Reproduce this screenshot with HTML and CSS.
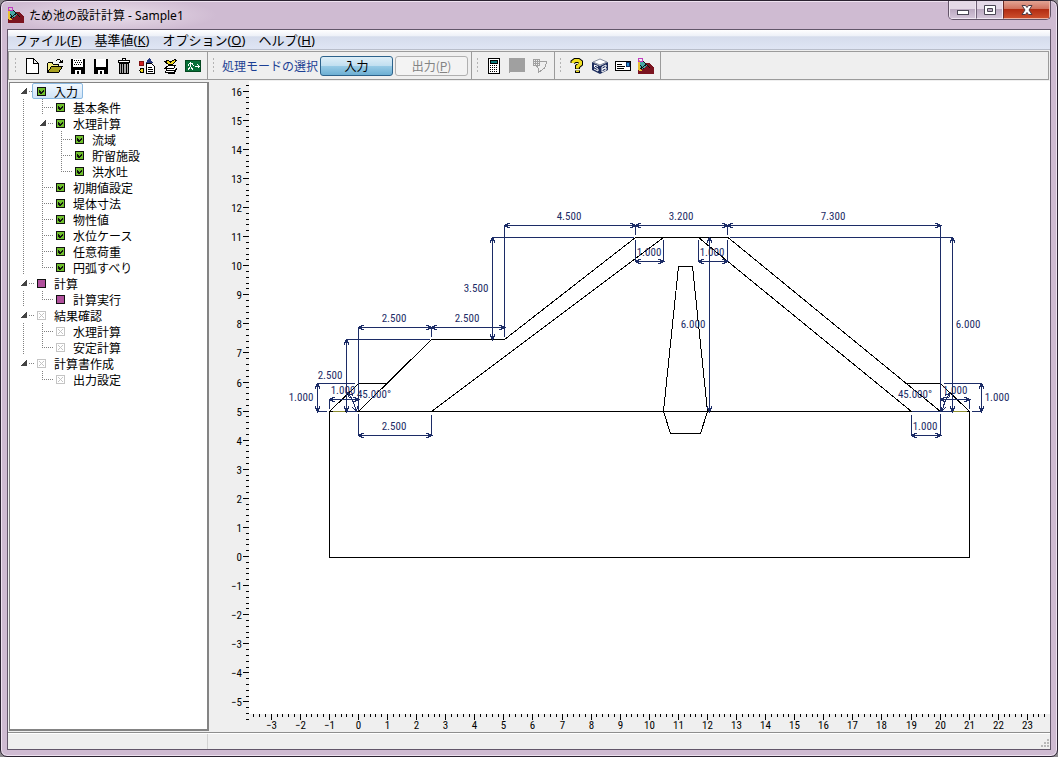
FILE: index.html
```html
<!DOCTYPE html>
<html lang="ja">
  <head>
    <meta charset="UTF-8" />
    <title>ため池の設計計算 - Sample1</title>
    <link rel="stylesheet" href="styles.css">
  </head>
  <body>
    <svg class="defs" aria-hidden="true">
      <symbol id="app" viewBox="0 0 16 16">
        <path fill="#7b1420" d="M0 16V11L4 9L9 5H12L14 8L16 10V16Z" />
        <path fill="#48a8a8" d="M1 4L5 3L9 7L5 11L1 12Z" />
        <path fill="none" stroke="#111" d="M5 3L12 10M1 12L9 6M2 7L6 11" />
        <path fill="#e8c030" d="M0 2H2V11L4 13H1L0 12Z" />
        <path fill="none" stroke="#c03cc0" d="M0.500 4V0.500H4.500V3.500H1" />
      </symbol>
      <symbol id="done" viewBox="0 0 9 9">
        <path fill="#111" d="M0 0H9V9H0Z" />
        <path fill="#6fc02c" d="M1 1H8V8H1Z" />
        <path fill="#111" d="M2 3H3V4H4V5H5V4H6V3H7V5H6V6H5V7H3V6H2Z" />
      </symbol>
      <symbol id="todo" viewBox="0 0 9 9">
        <path fill="#111" d="M0 0H9V9H0Z" />
        <path fill="#b0509c" d="M1 1H8V8H1Z" />
      </symbol>
      <symbol id="off" viewBox="0 0 9 9">
        <path fill="none" stroke="#c4c4c4" d="M0.500 0.500H8.500V8.500H0.500ZM2 2L7 7M7 2L2 7" />
      </symbol>
    </svg>

    <div class="window">
      <header class="titlebar">
        <svg class="icon"><use href="#app" /></svg>
        <h1>ため池の設計計算 - Sample1</h1>
        <div class="caption">
          <button type="button" class="min" aria-label="最小化">
            <svg width="14" height="12"><rect x="1.500" y="6.500" width="11" height="4" fill="#fff" stroke="#4a4654" /></svg>
          </button>
          <button type="button" class="max" aria-label="最大化">
            <svg width="14" height="12"><path fill="#fff" stroke="#4a4654" fill-rule="evenodd" d="M1.500 1.500H12.500V10.500H1.500ZM4.500 4.500V7.500H9.500V4.500Z" /></svg>
          </button>
          <button type="button" class="close" aria-label="閉じる">
            <svg width="14" height="12"><path fill="#fff" stroke="#4a3a44" d="M2 1.500H5.500L7 3.500L8.500 1.500H12L9 6L12 10.500H8.500L7 8.500L5.500 10.500H2L5 6Z" /></svg>
          </button>
        </div>
      </header>

      <div class="client">
        <nav class="menubar">
          <a href="#">ファイル(<u>F</u>)</a>
          <a href="#">基準値(<u>K</u>)</a>
          <a href="#">オプション(<u>O</u>)</a>
          <a href="#">ヘルプ(<u>H</u>)</a>
        </nav>

        <div class="toolbar">
          <div class="group">
            <button type="button" class="tool" aria-label="新規">
              <svg class="icon"><path fill="#fff" stroke="#000" d="M2.500 0.500H9.500L14.500 5.500V15.500H2.500ZM9.500 0.500V5.500H14.500" /></svg>
            </button>
            <button type="button" class="tool" aria-label="開く">
              <svg class="icon"><path fill="#f4ec80" stroke="#000" d="M0.500 14.500V5.500L2 4.500H5L6.500 6.500H11.500V8.500" /><path fill="#a8a020" stroke="#000" d="M0.500 14.500L4.500 8.500H15.500L11.500 14.500Z" /><path fill="none" stroke="#000" d="M8.500 3.500L10.500 1.500H12.500L14.500 4M12 4.500H15V1.500" /></svg>
            </button>
            <button type="button" class="tool" aria-label="保存">
              <svg class="icon"><path d="M1 1H15V16H1Z" /><path fill="#fff" d="M3 1H13V9H3ZM5 12H11V16H9V13H7V16H5Z" /><path stroke="#000" stroke-dasharray="1 1" d="M4 2.500H12M5 4.500H12M4 6.500H12" /></svg>
            </button>
            <button type="button" class="tool" aria-label="上書き保存">
              <svg class="icon"><path d="M1 1H15V16H1Z" /><path fill="#fff" d="M3 1H13V9H3ZM5 12H11V16H9V13H7V16H5Z" /></svg>
            </button>
            <button type="button" class="tool" aria-label="削除">
              <svg class="icon"><path d="M2 2H6V0H10V2H14V5H2Z" /><path fill="#aaa" stroke="#000" d="M3.500 5.500H12.500V15.500H3.500Z" /><path stroke="#000" d="M5.500 5V15M7.500 5V15M10.500 5V15" /><path fill="#fff" d="M7 1H9V2H7ZM3 3H13V4H3Z" /></svg>
            </button>
            <button type="button" class="tool" aria-label="レポート">
              <svg class="icon"><path fill="#d02020" stroke="#801010" d="M0.500 3.500H4.500V7.500H0.500Z" /><path fill="#24357c" d="M7 5L10 0H11L14 5Z" /><circle cx="3" cy="12.500" r="2" fill="#f0d820" stroke="#000" /><path fill="#fff" stroke="#000" d="M7.500 5.500H12.500L15.500 8.500V15.500H7.500ZM9 9.500H13M9 11.500H14M9 13.500H14" /></svg>
            </button>
            <button type="button" class="tool" aria-label="登録">
              <svg class="icon"><path fill="#f0d820" stroke="#000" d="M2.500 3.500L6.500 2.500L8.500 4L12.500 1.500L14.500 2.500L10.500 6.500H6.500Z" /><path fill="#fff" stroke="#000" d="M2.500 10.500L6.500 7.500H13.500L11.500 10.500ZM4.500 11.500L3.500 14.500H12.500L14.500 10.500" /><path stroke="#000" stroke-width="2" d="M6 15H13" /><path stroke="#000" d="M4 12.500H13" /></svg>
            </button>
            <button type="button" class="tool" aria-label="終了">
              <svg class="icon"><path fill="#087038" stroke="#044820" d="M0.500 2.500H15.500V13.500H0.500Z" /><path fill="none" stroke="#fff" d="M5.500 4V9M3 7.500L4.500 5.500H7.500L8.500 8M5 9L3 12M6 9L8 12M10 8.500H14M12.500 6.500L14.500 8.500L12.500 10.500" /></svg>
            </button>
          </div>
          <div class="group">
            <span class="mode">処理モードの選択</span>
            <button type="button" class="switch on">入力</button>
            <button type="button" class="switch" disabled>出力(<u>P</u>)</button>
          </div>
          <div class="group">
            <button type="button" class="tool" aria-label="計算">
              <svg class="icon"><path fill="#fff" stroke="#000" d="M2.500 0.500H13.500V15.500H2.500Z" /><path fill="#087878" stroke="#000" d="M4.500 2.500H11.500V5.500H4.500Z" /><path stroke="#000" stroke-dasharray="1 1" d="M4 7.500H12M4 9.500H12M4 11.500H12M4 13.500H12" /></svg>
            </button>
            <button type="button" class="tool" aria-label="一覧" disabled>
              <svg class="icon"><path fill="#a0a0a0" d="M0 0H16V14H1V15H0Z" /></svg>
            </button>
            <button type="button" class="tool" aria-label="図" disabled>
              <svg class="icon"><path fill="none" stroke="#a0a0a0" d="M1.500 1.500H7.500V7.500H1.500ZM3.500 1V8M5.500 1V8M1 3.500H8M1 5.500H8M7.500 3.500H14.500V5L12.500 10L6.500 14.500V10.500L4.500 8" /></svg>
            </button>
          </div>
          <div class="group">
            <button type="button" class="tool" aria-label="ヘルプ">
              <svg class="icon smooth"><path fill="none" stroke="#000" stroke-width="5" d="M4 5V4L6 2.500H9.500L11.500 4V6L8.500 8.500V11M8.500 12.500V15" /><path fill="none" stroke="#f0e020" stroke-width="3" d="M4 5V4L6 2.500H9.500L11.500 4V6L8.500 8.500V10.500M8.500 12.500V14" /></svg>
            </button>
            <button type="button" class="tool" aria-label="ホームページ">
              <svg class="icon smooth"><path fill="#fff" stroke="#8890a0" d="M1 4L8 1L15 4L8 7Z" /><path fill="#1c2c5c" d="M0 4L8 8V16L0 12ZM8 8L16 4V12L8 16Z" /><path fill="none" stroke="#fff" d="M6 8.500L2.500 7V9L6 11V13L2 11M10 14V9L14 7V9L10 11.500L14 10V12L10 14" /></svg>
            </button>
            <button type="button" class="tool" aria-label="メール">
              <svg class="icon"><path fill="#fff" stroke="#000" d="M0.500 3.500H15.500V12.500H0.500ZM2 6.500H7M2 8.500H10M2 10.500H9" /><path fill="#2890d0" stroke="#102860" d="M11.500 4.500H14.500V8.500H11.500Z" /></svg>
            </button>
            <button type="button" class="tool" aria-label="バージョン情報">
              <svg class="icon"><use href="#app" /></svg>
            </button>
          </div>
        </div>

        <main>
          <aside>
            <ul class="tree">
              <li>
                <div class="row"><i class="open"></i><a class="selected" href="#"><svg><use href="#done" /></svg>入力</a></div>
                <ul>
                  <li><div class="row"><i></i><a href="#"><svg><use href="#done" /></svg>基本条件</a></div></li>
                  <li>
                    <div class="row"><i class="open"></i><a href="#"><svg><use href="#done" /></svg>水理計算</a></div>
                    <ul>
                      <li><div class="row"><i></i><a href="#"><svg><use href="#done" /></svg>流域</a></div></li>
                      <li><div class="row"><i></i><a href="#"><svg><use href="#done" /></svg>貯留施設</a></div></li>
                      <li><div class="row"><i></i><a href="#"><svg><use href="#done" /></svg>洪水吐</a></div></li>
                    </ul>
                  </li>
                  <li><div class="row"><i></i><a href="#"><svg><use href="#done" /></svg>初期値設定</a></div></li>
                  <li><div class="row"><i></i><a href="#"><svg><use href="#done" /></svg>堤体寸法</a></div></li>
                  <li><div class="row"><i></i><a href="#"><svg><use href="#done" /></svg>物性値</a></div></li>
                  <li><div class="row"><i></i><a href="#"><svg><use href="#done" /></svg>水位ケース</a></div></li>
                  <li><div class="row"><i></i><a href="#"><svg><use href="#done" /></svg>任意荷重</a></div></li>
                  <li><div class="row"><i></i><a href="#"><svg><use href="#done" /></svg>円弧すべり</a></div></li>
                </ul>
              </li>
              <li>
                <div class="row"><i class="open"></i><a href="#"><svg><use href="#todo" /></svg>計算</a></div>
                <ul>
                  <li><div class="row"><i></i><a href="#"><svg><use href="#todo" /></svg>計算実行</a></div></li>
                </ul>
              </li>
              <li>
                <div class="row"><i class="open"></i><a href="#"><svg><use href="#off" /></svg>結果確認</a></div>
                <ul>
                  <li><div class="row"><i></i><a href="#"><svg><use href="#off" /></svg>水理計算</a></div></li>
                  <li><div class="row"><i></i><a href="#"><svg><use href="#off" /></svg>安定計算</a></div></li>
                </ul>
              </li>
              <li>
                <div class="row"><i class="open"></i><a href="#"><svg><use href="#off" /></svg>計算書作成</a></div>
                <ul>
                  <li><div class="row"><i></i><a href="#"><svg><use href="#off" /></svg>出力設定</a></div></li>
                </ul>
              </li>
            </ul>
          </aside>

          <svg class="plot" viewBox="209 80 841 652" role="img" aria-label="堤体断面図">
            <defs>
              <marker id="arrow" viewBox="0 0 7 7" refX="6" refY="3.500" markerWidth="7" markerHeight="7" orient="auto-start-reverse">
                <path fill="none" stroke="#1c2c66" d="M1 1L6 3.500L1 6" />
              </marker>
            </defs>
            <rect class="paper" x="249" y="81" width="801" height="633" />
            <g id="ruler"></g>

            <g class="section">
              <path d="M329.500 411.500H969.500V557.500H329.500Z" />
              <path d="M329.500 411.500L358.500 383.500H387" />
              <path d="M358.500 411.500L431.500 339.500H504.500L635.500 237.500H728L940.500 411.500" />
              <path d="M431.500 411.500L663.500 237.500M698.500 237.500L911.500 411.500" />
              <path d="M905 383.500H940.500L969.500 411.500" />
              <path d="M678.500 266.500H692.500L707.500 411.500L700.500 433.500H670.500L663.500 411.500Z" />
              <path class="water" d="M333 411.500H345M953 411.500H967" />
            </g>

            <g class="extension">
              <path d="M504.500 225V337M635.500 225V235M727.500 225V235M940.500 225V411" />
              <path d="M492 237.500H634M730 237.500H953M635.500 240V262M663.500 240V262M698.500 240V262M727.500 240V262" />
              <path d="M358.500 327V411M431.500 327V337M346 339.500H430" />
              <path d="M317 383.500H355M317 411.500H327M347 411.500H357M329.500 399V409" />
              <path d="M358.500 414V436M431.500 415V436" />
              <path d="M911.500 415V436M940.500 414V436M912 411.500H952" />
              <path d="M944 383.500H981M972 411.500H981M969.500 399V409" />
            </g>

            <g class="dimension">
              <path d="M504.500 225.500H635.500" />
              <path d="M635.500 225.500H727.500" />
              <path d="M727.500 225.500H940.500" />
              <path d="M635.500 261.500H663.500" />
              <path d="M698.500 261.500H727.500" />
              <path d="M492.500 237.500V339.500" />
              <path d="M709.500 237.500V411.500" />
              <path d="M952.500 237.500V411.500" />
              <path d="M358.500 327.500H431.500" />
              <path d="M431.500 327.500H504.500" />
              <path d="M346.500 339.500V411.500" />
              <path d="M317.500 383.500V411.500" />
              <path d="M329.500 399.500H358.500" />
              <path d="M348 393Q353 399 356.500 411.500" />
              <path d="M358.500 435.500H431.500" />
              <path d="M911.500 435.500H940.500" />
              <path d="M950 393Q945 399 942 411.500" />
              <path d="M940.500 399.500H969.500" />
              <path d="M981.500 383.500V411.500" />
            </g>

            <g class="value">
              <text x="569" y="220">4.500</text>
              <text x="681" y="220">3.200</text>
              <text x="833" y="220">7.300</text>
              <text x="649" y="256">1.000</text>
              <text x="712" y="256">1.000</text>
              <text x="476" y="292">3.500</text>
              <text x="693" y="328">6.000</text>
              <text x="968" y="328">6.000</text>
              <text x="394" y="322">2.500</text>
              <text x="467" y="322">2.500</text>
              <text x="330" y="379">2.500</text>
              <text x="301" y="401">1.000</text>
              <text x="343" y="394">1.000</text>
              <text x="374" y="398">45.000°</text>
              <text x="394" y="430">2.500</text>
              <text x="925" y="430">1.000</text>
              <text x="915" y="398">45.000°</text>
              <text x="955" y="394">1.000</text>
              <text x="997" y="401">1.000</text>
            </g>
          </svg>
        </main>

        <footer>
          <span></span>
          <svg width="10" height="10"><path fill="#b8b8b8" d="M7 0h2v2h-2zM4 3h2v2h-2zM7 3h2v2h-2zM1 6h2v2h-2zM4 6h2v2h-2zM7 6h2v2h-2z" /></svg>
        </footer>
      </div>
    </div>
    <script src="ruler.js"></script>
  </body>
</html>
```

FILE: styles.css
```css
* {
  box-sizing: border-box;
}
body {
  margin: 0;
  background: #8d8a8e;
  color: #000;
  font-family: "Noto Sans CJK JP", sans-serif;
  font-size: 12px;
}
h1,
ul {
  margin: 0;
  padding: 0;
}
a {
  color: inherit;
  text-decoration: none;
}
button {
  padding: 0;
  font: inherit;
}
.defs {
  display: none;
}
.icon {
  width: 16px;
  height: 16px;
  shape-rendering: crispEdges;
}
.smooth {
  shape-rendering: auto;
}
.window {
  display: flex;
  flex-direction: column;
  height: 100vh;
  padding: 0 6px 6px;
  border: 1px solid #2a2230;
  border-radius: 7px;
  background: #cfbbd2;
  box-shadow: inset 0 0 0 1px #eee2f0;
}
.titlebar {
  display: flex;
  align-items: center;
  gap: 5px;
  height: 28px;
  background: radial-gradient(ellipse 110px 18px at 100px 14px, #eadfeb, transparent);
}
.titlebar .icon {
  margin-left: 1px;
}
h1 {
  flex: 1;
  font-family: "Noto Sans", "Noto Sans CJK JP", sans-serif;
  font-size: 12px;
  font-weight: normal;
}
.caption {
  display: flex;
  align-self: flex-start;
  overflow: hidden;
  height: 19px;
  border: 1px solid #625468;
  border-top: 0;
  border-radius: 0 0 5px 5px;
}
.caption button {
  display: flex;
  align-items: center;
  justify-content: center;
  width: 27px;
  border: 1px solid #efe6f1;
  border-top: 0;
  background: linear-gradient(#e4d8e7 48%, #bba9c1 50%, #d3c4d8);
}
.caption .max {
  border-left: 1px solid #6f6077;
}
.caption .close {
  width: 47px;
  border-color: #eeb4a4;
  border-left: 1px solid #6b2a26;
  background: linear-gradient(#e3a494, #d0705c 48%, #b22c12 50%, #cc4e2c);
}
.client {
  display: flex;
  flex: 1;
  flex-direction: column;
  min-height: 0;
  border: 1px solid #62566a;
  background: #efefef;
}
.menubar {
  display: flex;
  align-items: center;
  gap: 13px;
  height: 20px;
  padding: 0 7px;
  border-bottom: 1px solid #b8bdca;
  background: linear-gradient(#fff, #eef1f8 30%, #d5dcec 36%, #dfe5f4);
  font-family: "Noto Sans", "Noto Sans CJK JP", sans-serif;
  font-size: 13px;
  line-height: 18px;
}
.toolbar {
  display: flex;
  height: 29px;
  margin: 1px 1px 0 0;
  padding-left: 1px;
  border: 1px solid #9b9b9b;
}
.group {
  display: flex;
  align-items: center;
  padding: 0 3px 0 10px;
  border-right: 1px solid #9b9b9b;
  background: radial-gradient(circle, #b4b4b4 1px, transparent 1px) 4px 5px / 3px 4px no-repeat, radial-gradient(circle, #b4b4b4 1px, transparent 1px) 4px 9px / 3px 4px no-repeat, radial-gradient(circle, #b4b4b4 1px, transparent 1px) 4px 13px / 3px 4px no-repeat, radial-gradient(circle, #b4b4b4 1px, transparent 1px) 4px 17px / 3px 4px no-repeat;
}
.tool {
  display: flex;
  justify-content: center;
  width: 23px;
  border: 0;
  background: none;
}
.mode {
  width: 102px;
  padding-left: 4px;
  color: #1c3f94;
}
.switch {
  width: 73px;
  height: 20px;
  margin-right: 2px;
  border: 1px solid #b0b0b0;
  border-radius: 3px;
  background: #f3f3f3;
  color: #838383;
  line-height: 16px;
}
.switch:last-child {
  margin-right: 0;
}
.on {
  border: 1px solid #2c628b;
  background: linear-gradient(#dfeff8, #c1dff0 48%, #98cbe6 50%, #6dafd3);
  color: #000;
}
main {
  display: flex;
  flex: 1;
  min-height: 0;
}
aside {
  flex: none;
  width: 200px;
  margin: 2px 0 1px 1px;
  padding: 0 0 0 5px;
  border: 1px solid #848484;
  border-right-width: 2px;
  border-bottom-width: 2px;
  background: #fff;
  overflow: auto;
}
ul {
  list-style: none;
}
/* dotted guide lines sit behind the rows */
.tree li {
  background: repeating-linear-gradient(#808080 0 1px, transparent 1px 2px) 8px 0 / 1px 100% no-repeat, repeating-linear-gradient(90deg, #808080 0 1px, transparent 1px 2px) 8px 8px / 11px 1px no-repeat;
}
.tree li:last-child {
  background-size: 1px 9px, 11px 1px;
}
.tree > li:first-child {
  background-position: 8px 8px;
}
.tree ul {
  margin-left: 19px;
}
.row {
  display: flex;
  align-items: center;
  height: 16px;
}
.row i {
  width: 17px;
  height: 16px;
}
.row .open {
  background: linear-gradient(135deg, transparent 50%, #444 50%) 5px 5px / 7px 6px no-repeat, linear-gradient(#fff, #fff) 0 0 / 14px 16px no-repeat;
}
.row a {
  display: flex;
  align-items: center;
  height: 16px;
  padding: 0 4px;
  border: 1px solid transparent;
}
.row svg {
  width: 9px;
  height: 9px;
  margin-right: 8px;
  shape-rendering: crispEdges;
}
.row .selected {
  border-color: #8ab8e0;
  border-radius: 2px;
  background: linear-gradient(#f2f8fe, #cfe3f8);
}
.plot {
  flex: 1;
  min-width: 0;
  height: 100%;
  overflow: visible;
  shape-rendering: crispEdges;
  font-family: "Roboto Condensed", "DejaVu Sans Condensed", Roboto, sans-serif;
  font-size: 11px;
}
.paper {
  fill: #fff;
}
#ruler path {
  stroke: #000;
}
.section path {
  fill: none;
  stroke: #000;
}
.section .water {
  stroke: #8c8c30;
}
.extension path,
.dimension path {
  fill: none;
  stroke: #1c2c66;
}
.dimension path {
  marker-start: url(#arrow);
  marker-end: url(#arrow);
}
.value {
  fill: #1c2c66;
  text-anchor: middle;
}
footer {
  display: flex;
  align-items: flex-end;
  justify-content: space-between;
  height: 17px;
  border-top: 1px solid #8e8e8e;
  box-shadow: inset 0 1px #fff;
}
footer span {
  width: 200px;
  height: 15px;
  border-right: 1px solid #d2d2d2;
}
```

FILE: ruler.js
```js
const ruler = document.getElementById("ruler");
const NS = "http://www.w3.org/2000/svg";
const SCALE = 29.08;

function tick(d) {
  const path = document.createElementNS(NS, "path");
  path.setAttribute("d", d);
  ruler.appendChild(path);
}

function label(x, y, value, anchor) {
  const text = document.createElementNS(NS, "text");
  text.setAttribute("x", x);
  text.setAttribute("y", y);
  text.setAttribute("text-anchor", anchor);
  text.textContent = String(value).replace("-", "−");
  ruler.appendChild(text);
}

// five steps per metre, every fifth one is numbered
for (let i = -18; i <= 118; i++) {
  const x = Math.round(358 + i / 5 * SCALE) + 0.5;
  tick(`M${x} 714V${i % 5 ? 717 : 720}`);
  if (i % 5 === 0) label(x, 729, i / 5, "middle");
}
for (let i = -28; i <= 81; i++) {
  const y = Math.round(556 - i / 5 * SCALE) + 0.5;
  tick(`M${i % 5 ? 246 : 243} ${y}H249`);
  if (i % 5 === 0) label(242, y + 4, i / 5, "end");
}
```
